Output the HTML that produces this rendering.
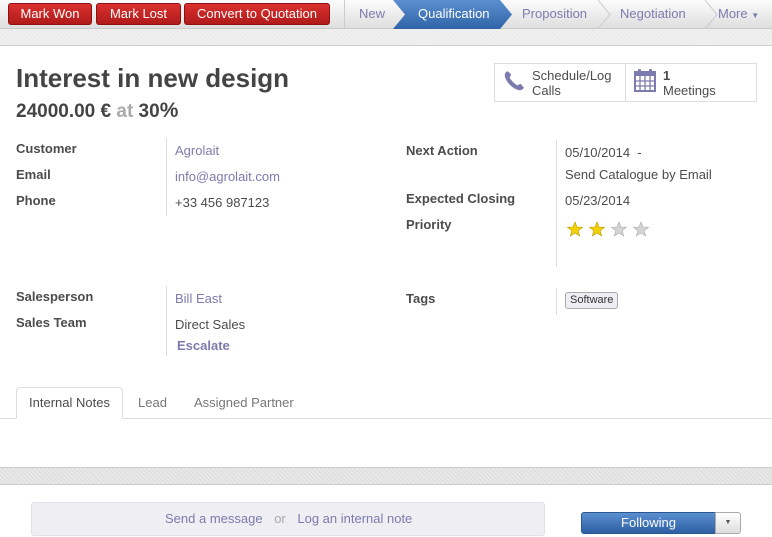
<!DOCTYPE html>
<html><head><meta charset="utf-8"><style>
*{box-sizing:border-box;margin:0;padding:0}
body{width:772px;height:537px;overflow:hidden;background:#fff;font-family:"Liberation Sans",sans-serif;font-size:13px;color:#4c4c4c;position:relative}
.a{position:absolute;white-space:nowrap}
.top{left:0;top:0;width:772px;height:29px;background:linear-gradient(#fcfcfc,#dedede);border-bottom:1px solid #cacaca}
.band{left:0;top:29px;width:772px;height:17px;background:#f0f0f0;background-image:repeating-linear-gradient(45deg,#e9e9e9 0 1px,transparent 1px 3px);border-bottom:1px solid #d0d0d0}
.btn{top:3px;height:22px;background:linear-gradient(#d9312f,#b01a19);border:1px solid #8e1211;border-radius:3px;color:#fff;font-size:13px;line-height:20px;text-align:center}
.st{top:0;height:29px;line-height:28px;color:#7c7bad;font-size:13px}
.lbl{font-weight:bold;color:#4c4c4c}
.lnk{color:#7c7bad}
.vl{width:1px;background:#ddd}
</style></head><body>
<div class="a top"></div>
<div class="a band"></div>
<div class="a btn" style="left:8px;width:84px">Mark Won</div>
<div class="a btn" style="left:96px;width:85px">Mark Lost</div>
<div class="a btn" style="left:184px;width:146px">Convert to Quotation</div>
<div class="a" style="left:344px;top:0;width:1px;height:29px;background:#ccc"></div>
<svg class="a" style="left:345px;top:0" width="427" height="29">
<defs><linearGradient id="g" x1="0" y1="0" x2="0" y2="1"><stop offset="0" stop-color="#5b8fcf"/><stop offset="1" stop-color="#2f64a8"/></linearGradient></defs>
<polygon points="48,0 155,0 167,14.5 155,29 48,29 60,14.5" fill="url(#g)"/>
<polyline points="253,0 265,14.5 253,29" fill="none" stroke="#ccc"/>
<polyline points="360,0 372,14.5 360,29" fill="none" stroke="#ccc"/>
</svg>
<div class="a st" style="left:359px">New</div>
<div class="a st" style="left:418px;color:#fff">Qualification</div>
<div class="a st" style="left:522px">Proposition</div>
<div class="a st" style="left:620px">Negotiation</div>
<div class="a st" style="left:718px">More <span style="font-size:8px">▼</span></div>

<div class="a" style="left:16px;top:63px;font-size:26px;font-weight:bold;color:#444">Interest in new design</div>
<div class="a" style="left:16px;top:99px;font-size:19px;font-weight:bold;color:#444">24000.00 € <span style="color:#aaa">at</span> 30<span style="font-size:21px">%</span></div>

<div class="a" style="left:494px;top:63px;width:263px;height:39px;border:1px solid #ddd"></div>
<div class="a" style="left:625px;top:63px;width:1px;height:39px;background:#ddd"></div>
<svg class="a" style="left:503px;top:70px" width="22" height="22" viewBox="0 0 20 20"><path d="M4 1 C2 2 1 4 2 7 C4 12 8 16 13 18 C16 19 18 18 19 16 L16 12.5 L13 14 C10 12 8 10 6 7 L7.5 4 Z" fill="#7c7bad"/></svg>
<div class="a" style="left:532px;top:68px;line-height:15px">Schedule/Log<br>Calls</div>
<svg class="a" style="left:634px;top:68px" width="22" height="24" viewBox="0 0 22 24"><rect x="1" y="4" width="20" height="19" fill="none" stroke="#7c7bad" stroke-width="2"/><rect x="1" y="4" width="20" height="4" fill="#7c7bad"/><path d="M1 13H21M1 18H21M6 8V23M11 8V23M16 8V23" stroke="#7c7bad" stroke-width="1.3"/><rect x="4" y="1" width="3" height="6" rx="1" fill="#7c7bad"/><rect x="15" y="1" width="3" height="6" rx="1" fill="#7c7bad"/></svg>
<div class="a" style="left:663px;top:68px;line-height:15px"><b>1</b><br>Meetings</div>

<div class="a lbl" style="left:16px;top:141px">Customer</div>
<div class="a lbl" style="left:16px;top:167px">Email</div>
<div class="a lbl" style="left:16px;top:193px">Phone</div>
<div class="a vl" style="left:166px;top:138px;height:78px"></div>
<div class="a lnk" style="left:175px;top:143px">Agrolait</div>
<div class="a lnk" style="left:175px;top:169px">info@agrolait.com</div>
<div class="a" style="left:175px;top:195px">+33 456 987123</div>

<div class="a lbl" style="left:16px;top:289px">Salesperson</div>
<div class="a lbl" style="left:16px;top:315px">Sales Team</div>
<div class="a vl" style="left:166px;top:286px;height:70px"></div>
<div class="a lnk" style="left:175px;top:291px">Bill East</div>
<div class="a" style="left:175px;top:317px">Direct Sales</div>
<div class="a lnk" style="left:177px;top:338px;font-weight:bold">Escalate</div>

<div class="a lbl" style="left:406px;top:143px">Next Action</div>
<div class="a lbl" style="left:406px;top:191px">Expected Closing</div>
<div class="a lbl" style="left:406px;top:217px">Priority</div>
<div class="a vl" style="left:556px;top:140px;height:127px"></div>
<div class="a" style="left:565px;top:145px">05/10/2014 &nbsp;-</div>
<div class="a" style="left:565px;top:167px">Send Catalogue by Email</div>
<div class="a" style="left:565px;top:193px">05/23/2014</div>
<svg class="a" style="left:566px;top:221px" width="88" height="18" viewBox="0 0 88 18">
<defs><path id="s" d="M8 1 L10 6 L15.5 6.3 L11.2 9.8 L12.7 15 L8 12 L3.3 15 L4.8 9.8 L0.5 6.3 L6 6 Z"/></defs>
<use href="#s" x="1" fill="#f5d000" stroke="#b59a00" stroke-width=".6"/>
<use href="#s" x="23" fill="#f5d000" stroke="#b59a00" stroke-width=".6"/>
<use href="#s" x="45" fill="#d4d4d4" stroke="#aaa" stroke-width=".6"/>
<use href="#s" x="67" fill="#d4d4d4" stroke="#aaa" stroke-width=".6"/>
</svg>
<div class="a lbl" style="left:406px;top:291px">Tags</div>
<div class="a vl" style="left:556px;top:288px;height:27px"></div>
<div class="a" style="left:565px;top:292px;height:17px;padding:0 4px;border:1px solid #aaa;border-radius:3px;background:#eeeef3;font-size:11px;line-height:15px;color:#333">Software</div>

<div class="a" style="left:0;top:418px;width:772px;height:1px;background:#ddd"></div>
<div class="a" style="left:16px;top:387px;width:107px;height:32px;border:1px solid #ddd;border-bottom:1px solid #fff;border-radius:4px 4px 0 0;background:#fff;line-height:30px;text-align:center">Internal Notes</div>
<div class="a" style="left:138px;top:395px;color:#777">Lead</div>
<div class="a" style="left:194px;top:395px;color:#777">Assigned Partner</div>

<div class="a" style="left:0;top:467px;width:772px;height:18px;background:#e8e8e8;background-image:repeating-linear-gradient(45deg,#dcdcdc 0 1px,transparent 1px 3px);border-top:1px solid #ccc;border-bottom:1px solid #ccc"></div>
<div class="a" style="left:31px;top:502px;width:514px;height:34px;background:#eeeef3;border:1px solid #e0e0e8;border-radius:3px"></div>
<div class="a lnk" style="left:165px;top:511px">Send a message <span style="color:#aaa;margin:0 8px">or</span> Log an internal note</div>
<div class="a" style="left:581px;top:512px;width:135px;height:22px;background:linear-gradient(#5a8fd0,#2d5fa3);border:1px solid #2a5590;border-radius:3px 0 0 3px;color:#fff;text-align:center;line-height:20px">Following</div>
<div class="a" style="left:715px;top:512px;width:26px;height:22px;background:linear-gradient(#fff,#ddd);border:1px solid #aaa;border-radius:0 3px 3px 0;text-align:center;font-size:7px;line-height:20px;color:#555">▼</div>
</body></html>
